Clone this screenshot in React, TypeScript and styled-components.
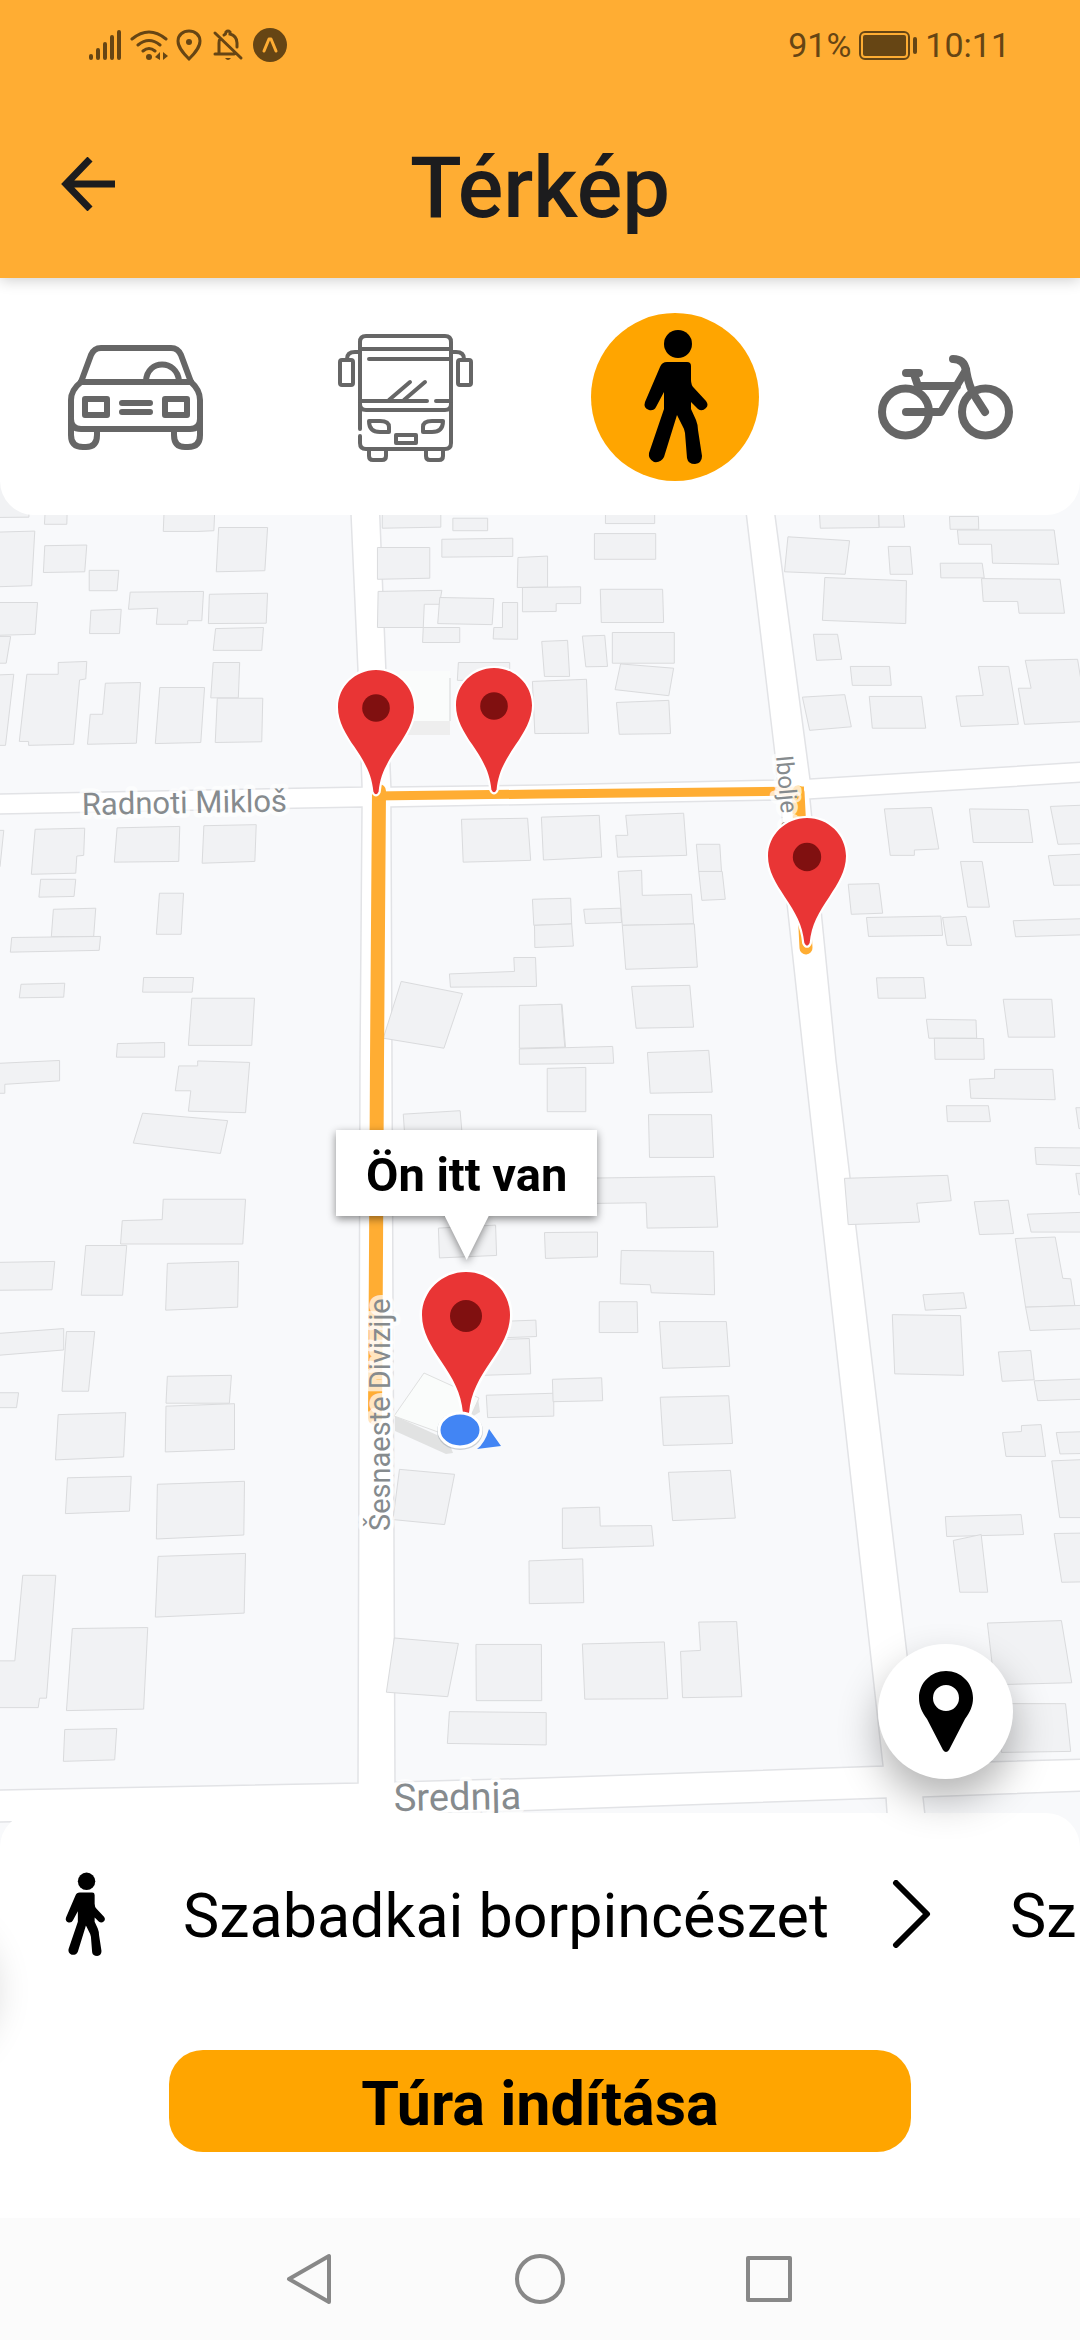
import React, { useState } from "react";
import styled, { createGlobalStyle } from "styled-components";

const amber = "#ffad33";
const orange = "#ffa500";
const statusInk = "#664514";
const iconGrey = "#666666";

const GlobalStyle = createGlobalStyle`
  * { box-sizing: border-box; }
  body { margin: 0; background: #fff; font-family: Roboto, "Noto Sans", sans-serif; color: #000; }
  button { font: inherit; color: inherit; background: none; border: 0; padding: 0; cursor: pointer; }
  h1 { margin: 0; }
  svg { display: block; }
`;

const Screen = styled.div`
  display: flex;
  flex-direction: column;
  min-height: 100vh;
  overflow: hidden;
`;

const TopArea = styled.header`
  position: relative;
  z-index: 3;
  background: ${amber};
  box-shadow: 0 2px 14px rgba(0, 0, 0, 0.2);
`;

const StatusBar = styled.div`
  display: flex;
  align-items: center;
  justify-content: space-between;
  height: 90px;
  padding: 0 70px 0 88px;
  color: ${statusInk};
  font-size: 34px;
  line-height: 40px;
`;

const StatusGroup = styled.div`
  display: flex;
  align-items: center;
  gap: 8px;
`;

const TitleBar = styled.div`
  display: grid;
  grid-template-columns: 120px 1fr 120px;
  align-items: center;
  height: 188px;
  padding: 0 28px;
`;

const BackButton = styled.button`
  display: flex;
  align-items: center;
  justify-content: center;
  width: 120px;
  height: 120px;
`;

const Title = styled.h1`
  padding-top: 8px;
  color: #1c1c1e;
  font-size: 85px;
  line-height: 100px;
  font-weight: 500;
  text-align: center;
`;

const ModePanel = styled.nav`
  position: relative;
  z-index: 2;
  display: grid;
  grid-template-columns: repeat(4, 1fr);
  justify-items: center;
  align-items: center;
  height: 237px;
  background: #fff;
  border-radius: 0 0 34px 34px;
`;

const ModeButton = styled.button<{ $active: boolean }>`
  display: flex;
  align-items: center;
  justify-content: center;
  width: 168px;
  height: 168px;
  border-radius: 50%;
  background: ${(p) => (p.$active ? orange : "transparent")};
`;

const MapCanvas = styled.main`
  position: relative;
  flex: 1;
  min-height: 600px;
  margin: -34px 0;
  background: #fff;
`;

const MapDrawing = styled.svg`
  position: absolute;
  inset: 0;
  width: 100%;
  height: 100%;
`;

const StreetLabel = styled.text`
  fill: #868b8e;
  stroke: rgba(255, 255, 255, 0.7);
  stroke-width: 9px;
  stroke-linejoin: round;
  paint-order: stroke;
`;

const Pin = styled.button<{ $x: number; $y: number; $w: number }>`
  position: absolute;
  left: ${(p) => p.$x - p.$w / 2}px;
  top: ${(p) => p.$y}px;
  width: ${(p) => p.$w}px;
`;

const PinSvg = styled.svg`
  width: 100%;
  height: auto;
  overflow: visible;
`;

const Callout = styled.div`
  position: absolute;
  left: 336px;
  top: 649px;
  filter: drop-shadow(0 3px 4px rgba(0, 0, 0, 0.45));
  display: flex;
  flex-direction: column;
  align-items: center;
`;

const CalloutText = styled.div`
  padding: 18px 30px 14px;
  background: #fff;
  font-size: 47px;
  line-height: 54px;
  font-weight: 700;
`;

const CalloutArrow = styled.div`
  width: 44px;
  height: 44px;
  background: #fff;
  clip-path: polygon(0 0, 100% 0, 50% 100%);
`;

const Position = styled.svg`
  position: absolute;
  left: 430px;
  top: 919px;
  pointer-events: none;
`;

const Sheet = styled.section`
  position: relative;
  z-index: 2;
  display: flex;
  flex-direction: column;
  align-items: center;
  padding: 0 10px 66px;
  background: #fff;
  border-radius: 34px 34px 0 0;
`;

const RoundButton = styled.button`
  position: absolute;
  top: -169px;
  right: 67px;
  display: flex;
  align-items: center;
  justify-content: center;
  width: 135px;
  height: 135px;
  border-radius: 50%;
  background: #fff;
  box-shadow: 0 20px 40px rgba(0, 0, 0, 0.3);
`;

const HiddenRoundButton = styled(RoundButton)`
  top: 90px;
  right: auto;
  left: -144px;
  box-shadow: 0 20px 40px rgba(0, 0, 0, 0.2);
`;

const Steps = styled.div`
  align-self: stretch;
  display: flex;
  align-items: center;
  height: 202px;
  margin-bottom: 35px;
  padding-left: 33px;
  margin-right: -10px;
  overflow: hidden;
  font-size: 61px;
  line-height: 72px;
  white-space: nowrap;
`;

const StepIcon = styled.span`
  flex: none;
`;

const StepName = styled.span<{ $gap: number }>`
  flex: none;
  padding-top: 4px;
  margin-left: ${(p) => p.$gap}px;
`;

const Chevron = styled.svg`
  flex: none;
  margin-left: 63px;
`;

const StartButton = styled.button`
  width: 70%;
  height: 102px;
  padding-top: 6px;
  border-radius: 34px;
  background: ${orange};
  font-size: 61px;
  line-height: 72px;
  font-weight: 700;
`;

const SystemNav = styled.footer`
  position: relative;
  z-index: 2;
  display: flex;
  align-items: center;
  justify-content: center;
  gap: 170px;
  height: 122px;
  background: #fbfbfb;
`;

const SystemButton = styled.button`
  width: 60px;
  height: 60px;
`;

type Quadrant = { x: number; y: number; sx: number; sy: number; shapes: string[] };

/* Building outlines, surveyed in four quadrants with their own grid. */
const quadrants: Quadrant[] = [
  {
    x: 0, y: 500, sx: 540 / 1568, sy: 560 / 1568,
    shapes: [
      "-20,-60 84,-60 84,48 -20,49", "129,68 133,0 196,0 194,68", "-10,90 101,87 92,240 -10,243",
      "126,203 130,128 252,126 246,201", "259,197 345,197 340,254 259,254", "474,88 477,20 624,20 621,86 575,88",
      "628,201 635,77 777,77 769,198", "-10,287 109,287 102,376 -10,379", "-10,382 31,382 18,457 -10,457",
      "373,306 378,258 591,256 586,338 545,338 545,348 454,348 458,303", "260,374 264,309 352,306 347,374",
      "605,346 608,264 777,261 773,345", "619,421 626,360 765,357 760,421",
      "56,676 78,488 169,488 169,455 252,452 249,501 231,504 214,684 83,687 83,676", "-10,490 40,488 16,687 -10,687",
      "254,684 262,600 298,600 306,513 408,511 396,681", "451,682 464,525 594,525 583,679",
      "612,554 619,455 696,455 692,554", "625,679 631,555 763,555 760,677", "1110,20 1280,20 1280,76 1110,79",
      "1315,51 1416,51 1416,86 1315,86", "1283,160 1283,110 1489,107 1489,158", "1096,133 1248,133 1248,219 1096,222",
      "1096,357 1098,256 1283,253 1276,292 1232,292 1229,357", "1271,346 1277,273 1434,276 1429,349",
      "1229,357 1335,357 1335,399 1227,399", "1432,389 1434,357 1459,357 1459,287 1503,287 1503,390",
      "1502,245 1504,161 1590,157 1590,244", "1517,245 1686,243 1686,290 1615,290 1615,312 1517,313",
      "1328,505 1331,455 1480,455 1480,505", "1546,508 1703,502 1709,653 1553,654", "-10,925 11,925 0,1027 -10,1027",
      "91,1048 102,922 246,919 243,995 223,997 220,1045", "332,1014 340,918 522,914 519,1012",
      "587,1017 592,912 744,909 740,1012", "113,1112 118,1062 220,1062 215,1110", "149,1223 155,1146 278,1143 272,1222",
      "30,1266 34,1225 292,1222 288,1261", "454,1216 463,1101 533,1101 526,1216", "56,1394 61,1356 188,1353 185,1392",
      "414,1378 417,1337 562,1337 558,1378", "547,1527 557,1395 739,1395 731,1527", "338,1560 341,1522 478,1519 478,1560",
      "1340,894 1532,891 1541,1009 1345,1014", "1305,1327 1494,1320 1492,1281 1555,1281 1558,1362 1308,1364",
      "1165,1348 1343,1382 1289,1535 1113,1507", "1546,1118 1657,1115 1660,1187 1550,1191",
      "1552,1191 1660,1187 1665,1249 1553,1253", "1558,1415 1632,1412 1642,1532 1568,1535",
    ],
  },
  {
    x: 540, y: 500, sx: 540 / 1568, sy: 560 / 1568,
    shapes: [
      "190,10 333,10 333,66 190,66", "158,94 336,94 336,166 158,166", "175,250 356,250 359,343 178,343",
      "123,381 188,379 196,466 133,467", "5,396 80,393 86,494 13,494", "210,371 390,371 390,457 210,457",
      "234,459 388,471 374,548 218,531", "222,567 374,561 379,654 230,656", "811,30 983,30 985,77 814,79",
      "983,30 1054,30 1059,76 985,76", "720,103 899,114 886,208 710,201", "1011,130 1075,130 1082,208 1017,208",
      "827,217 1064,226 1062,346 820,337", "1189,46 1273,46 1274,82 1191,82",
      "1212,84 1493,84 1506,180 1314,177 1311,124 1216,124", "1162,177 1284,177 1290,218 1164,218",
      "1282,220 1510,222 1523,317 1391,317 1387,284 1287,284", "794,376 864,376 876,446 803,449",
      "901,466 1015,466 1020,519 907,519", "762,552 885,545 904,635 783,645", "956,550 1108,550 1120,639 965,639",
      "1208,549 1287,547 1273,466 1361,466 1389,628 1222,634", "1409,449 1561,446 1590,620 1407,628 1389,527 1426,527",
      "4,888 172,883 179,1000 10,1008", "249,883 417,877 426,995 225,1000 220,939 255,939",
      "454,964 522,964 527,1040 461,1040", "461,1040 529,1040 538,1118 470,1121",
      "227,1040 295,1037 297,1107 440,1104 446,1187 239,1191", "239,1191 448,1187 457,1308 249,1314",
      "127,1146 234,1143 237,1183 132,1186", "266,1362 435,1359 446,1476 279,1479",
      "1000,865 1137,861 1158,977 1087,980 1087,995 1017,995", "1247,865 1418,867 1431,959 1258,959",
      "1482,858 1590,854 1590,962 1504,964", "1476,996 1590,991 1590,1078 1492,1079",
      "1221,1012 1284,1012 1305,1140 1242,1140", "895,1076 984,1074 995,1157 904,1160",
      "948,1169 1164,1165 1169,1219 954,1222", "1169,1169 1237,1166 1253,1247 1182,1247",
      "1374,1178 1590,1172 1590,1217 1381,1223", "977,1338 1114,1337 1120,1395 982,1395",
      "1345,1398 1486,1398 1495,1504 1360,1504", "1122,1454 1266,1456 1268,1507 1129,1507",
      "1145,1507 1288,1508 1290,1566 1147,1566", "-60,1415 62,1412 72,1532 -60,1535",
      "-60,1537 211,1530 214,1577 -60,1580", "312,1547 490,1541 500,1658 320,1661",
    ],
  },
  {
    x: 0, y: 1050, sx: 540 / 1568, sy: 780 / 1568,
    shapes: [
      "-10,27 173,21 173,62 14,69 14,87 -10,87", "509,82 519,32 574,32 574,22 725,25 713,126 547,123 554,82",
      "414,127 661,142 640,208 387,187", "350,390 355,343 471,341 474,300 713,300 705,390",
      "236,493 249,393 368,393 356,493", "-10,427 159,425 151,482 -10,483", "481,523 486,429 693,425 690,517",
      "-10,570 185,560 185,603 -10,614", "180,686 193,566 275,566 257,686", "-10,689 54,689 48,719 -10,719",
      "482,710 486,656 672,654 666,710", "480,808 482,716 681,711 681,803", "161,824 169,733 365,729 359,818",
      "190,932 196,860 381,857 376,927", "454,983 457,873 710,867 708,975", "451,1140 459,1018 713,1012 709,1132",
      "-10,1228 43,1228 66,1056 162,1056 135,1303 115,1303 111,1322 -10,1322", "193,1328 210,1163 429,1161 417,1325",
      "184,1430 188,1366 339,1364 333,1427", "1171,129 1336,122 1342,170 1175,170",
      "1273,358 1439,352 1442,413 1276,418", "1440,546 1556,543 1558,576 1440,579",
      "1400,583 1537,580 1541,651 1400,654", "1412,694 1608,690 1608,736 1416,739",
      "1160,843 1320,853 1291,954 1141,944", "1536,1027 1692,1023 1695,1111 1537,1113",
      "1145,1182 1331,1193 1300,1300 1122,1291", "1382,1195 1572,1195 1573,1308 1383,1308",
      "1305,1330 1586,1332 1586,1397 1299,1394",
    ],
  },
  {
    x: 540, y: 1050, sx: 540 / 1568, sy: 780 / 1568,
    shapes: [
      "21,37 133,35 133,124 21,124", "315,130 498,130 504,216 318,216",
      "100,258 507,254 516,356 311,358 308,307 100,309", "13,367 167,366 167,416 16,419",
      "236,403 504,405 507,492 323,488 320,472 233,470", "172,506 282,506 284,568 172,568",
      "347,546 541,546 551,636 356,640", "36,662 179,659 182,705 38,707", "349,698 548,695 559,791 358,795",
      "373,849 553,845 567,941 385,946", "65,921 173,919 175,957 324,956 330,997 65,1002",
      "123,1194 361,1190 371,1304 130,1305", "408,1209 466,1207 461,1150 571,1149 586,1300 414,1302",
      "1247,59 1320,57 1320,39 1489,39 1496,100 1251,97", "1180,112 1302,112 1308,144 1183,144",
      "884,258 1184,252 1194,303 1094,308 1102,346 895,351", "1261,305 1360,302 1375,369 1276,371",
      "1437,196 1590,197 1590,233 1441,230", "1415,330 1590,326 1590,366 1426,366",
      "1380,379 1496,376 1518,459 1541,460 1553,514 1410,517", "1410,517 1590,513 1590,560 1423,564",
      "1112,492 1230,488 1238,519 1119,523", "1023,532 1221,534 1230,654 1030,651",
      "1331,607 1425,604 1435,663 1342,666", "1435,665 1590,661 1590,702 1445,705",
      "1343,769 1398,767 1398,755 1455,753 1468,817 1353,817", "1499,769 1590,767 1590,811 1510,812",
      "1486,826 1590,823 1590,940 1509,940", "1177,938 1397,934 1404,974 1181,978",
      "1200,986 1281,974 1300,1090 1219,1090", "1493,972 1590,971 1590,1069 1515,1070",
      "1299,1152 1514,1147 1544,1272 1320,1276", "1330,1314 1526,1314 1541,1410 1340,1412",
      "1556,116 1590,116 1590,158 1565,158", "1556,248 1590,248 1590,291 1565,291",
    ],
  },
];

/* City blocks; the streets are the white gaps between them. */
const blocks = [
  "-5,470 350,470 351,515 358,672 362,787 -5,794",
  "378,470 386,672 391,787 540,785 777,780 775,755 741,470",
  "769,470 810,779 1085,762 1085,470",
  "-5,814 362,807 360,1060 358,1783 -5,1790",
  "391,807 781,800 787,904 804,1060 883,1766 540,1778 395,1782 392,1060",
  "810,799 1085,782 1085,1759 919,1764 907,1654 836,1060",
  "397,1815 886,1798 890,1860 397,1860",
  "923,1797 1085,1791 1085,1860 930,1860",
  "-5,1822 357,1815 357,1860 -5,1860",
];

function StreetMap() {
  return (
    <MapDrawing viewBox="0 481 1080 1366" preserveAspectRatio="xMidYMid slice" aria-hidden="true">
      <g fill="#f8f9fb" stroke="#e2e3e6" strokeWidth="1.5">
        {blocks.map((points) => (
          <polygon key={points} points={points} />
        ))}
      </g>
      {quadrants.map((q) => (
        <g
          key={`${q.x}-${q.y}`}
          transform={`translate(${q.x} ${q.y}) scale(${q.sx} ${q.sy})`}
          fill="#f1f2f4"
          stroke="#dadbdd"
        >
          {q.shapes.map((points) => (
            <polygon key={points} points={points} vectorEffect="non-scaling-stroke" />
          ))}
        </g>
      ))}
      <path d="M400 671H450V713H400Z" fill="#fafcfb" />
      <path d="M400 721H450V735H400Z" fill="#eeeeee" />
      <path d="M400 678H450V721H400Z" fill="#fafcfb" />
      <path d="M450 678V721" stroke="#d5d7d7" />
      <path d="M395 1416L448 1440L453 1453L446 1454L395 1431Z" fill="#e1e2e2" />
      <path d="M478 1398L480 1412L470 1418Z" fill="#e1e2e2" />
      <path d="M424 1373L479 1398L460 1440L394 1416Z" fill="#fafcfb" stroke="#dfe0e0" />
      <g fill="none" stroke={amber}>
        <path d="M379 791L377 1060L376 1250L375 1418" strokeWidth="14" strokeLinecap="round" />
        <path d="M373 796L540 794L804 791" strokeWidth="9" />
        <path d="M798 792L802 870L806 948" strokeWidth="13" strokeLinecap="round" />
      </g>
      <StreetLabel x="82" y="815" fontSize="31" transform="rotate(-1 82 815)">Radnoti Mikloš</StreetLabel>
      <StreetLabel fontSize="29" transform="translate(390 1531) rotate(-90)">Šesnaeste Divizije</StreetLabel>
      <StreetLabel fontSize="24" transform="translate(776 756) rotate(85)">Ibolje t</StreetLabel>
      <StreetLabel x="394" y="1811" fontSize="38" transform="rotate(-1 394 1811)">Srednja</StreetLabel>
    </MapDrawing>
  );
}

function PinShape() {
  return (
    <PinSvg viewBox="0 0 88 145">
      <path
        d="M44 0C68 0 88 19 88 43C88 60 79 74 69 89C57 107 49 120 47 141Q44 147 41 141C39 120 31 107 19 89C9 74 0 60 0 43C0 19 20 0 44 0Z"
        fill="#e93535"
        stroke="#fff"
        strokeWidth="5"
        paintOrder="stroke"
      />
      <circle cx="44" cy="44" r="16" fill="#801010" />
    </PinSvg>
  );
}

function CarIcon() {
  return (
    <svg width="135" height="135" viewBox="0 0 135 135" fill="none" stroke={iconGrey} strokeWidth="6" strokeLinecap="round" strokeLinejoin="round">
      <path d="M13 53L23 26Q26 19 33 19H103Q110 19 113 26L123 53" />
      <path d="M13 53H123" />
      <path d="M13 53Q3 61 3 71V106Q3 118 15 118H18Q29 118 29 106V101" />
      <path d="M123 53Q132 61 132 71V106Q132 118 120 118H117Q106 118 106 106V101" />
      <path d="M3 90Q3 100 13 100H122Q132 100 132 90" />
      <path d="M78 52C79 30 109 30 111 52" />
      <rect x="17" y="70" width="22" height="16" />
      <rect x="97" y="70" width="22" height="16" />
      <path d="M54 74H82M54 83H82" />
    </svg>
  );
}

function BusIcon() {
  return (
    <svg width="135" height="135" viewBox="0 0 135 135" fill="none" stroke={iconGrey} strokeWidth="4" strokeLinecap="round" strokeLinejoin="round">
      <path d="M22 100V13Q22 7 28 7H107Q113 7 113 13V114Q113 120 107 120H28Q22 120 22 114V107" />
      <path d="M22 20H113M31 30H113M22 72H89M98 72H113" />
      <path d="M22 75Q22 81 28 81H107Q113 81 113 75" />
      <path d="M22 23H17Q9 23 9 30M113 23H118Q126 23 126 30" />
      <rect x="2" y="31" width="13" height="25" rx="2" />
      <rect x="120" y="31" width="13" height="25" rx="2" />
      <path d="M72 53L51 71M87 53L66 71" />
      <path d="M31 92H42Q51 92 51 98V103H42Q31 103 31 92ZM105 92H94Q85 92 85 98V103H94Q105 103 105 92Z" />
      <rect x="58" y="106" width="20" height="8" />
      <path d="M31 121V127Q31 131 35 131H44Q48 131 48 127V121M88 121V127Q88 131 92 131H101Q105 131 105 127V121" />
    </svg>
  );
}

function WalkIcon({ size }: { size: number }) {
  return (
    <svg width={size} height={size} viewBox="0 0 135 135">
      <circle cx="70" cy="15" r="14" />
      <path d="M59 33H79Q83 33 83 37V51Q83 56 86 59L98 72Q101 76 98 79Q94 83 90 80L83 73V80L88 91Q90 96 90 101L94 127Q94 134 87 135Q80 135 79 129L77 104Q76 99 74 96L69 86L56 128Q53 134 46 133Q40 130 41 124L56 80V63L48 78Q46 82 41 81Q35 79 37 73L52 38Q54 33 59 33Z" />
    </svg>
  );
}

function BikeIcon() {
  return (
    <svg width="135" height="135" viewBox="0 0 135 135" fill="none" stroke={iconGrey} strokeWidth="8" strokeLinecap="round" strokeLinejoin="round">
      <circle cx="27.5" cy="83" r="23.5" />
      <circle cx="107.5" cy="83" r="23.5" />
      <path d="M28 44H41M36 45L40 57H79M28 83H63L88 41" />
      <path d="M75 30Q86 30 88 41Q91 59 98 69L107 83" />
    </svg>
  );
}

function StatusIcons() {
  return (
    <svg width="200" height="34" viewBox="0 0 200 34" fill="none" stroke={statusInk} strokeWidth="4" strokeLinecap="round" role="img" aria-label="Állapot">
      <path d="M3 28V30M10 22V30M17 16V30M24 9V30M31 4V30" />
      <path d="M44 11Q61 -3 78 11M50 17Q61 8 72 17M55 23Q61 18 67 23" strokeWidth="3" />
      <circle cx="61" cy="29" r="3" fill={statusInk} stroke="none" />
      <path d="M72 24V32L67 29ZM75 24V32L80 28Z" fill={statusInk} stroke="none" />
      <path d="M101 31C96 26 90 20 90 13C90 7 95 3 101 3C107 3 112 7 112 13C112 20 106 26 101 31Z" strokeWidth="3" />
      <circle cx="101" cy="14" r="3" fill={statusInk} stroke="none" />
      <path d="M127 5L153 30M127 26H146M131 25V15Q131 12 132 11M136 7Q138 6 138 4Q140 2 142 4L142 6Q149 8 149 15V19" strokeWidth="3" />
      <path d="M137 30H143Q140 34 137 30Z" fill={statusInk} stroke="none" />
      <circle cx="182" cy="17" r="17" fill={statusInk} stroke="none" />
      <path d="M176 23L181 11H183L188 23" stroke={amber} strokeWidth="3" strokeLinejoin="round" />
    </svg>
  );
}

function BatteryIcon() {
  return (
    <svg width="58" height="29" viewBox="0 0 58 29" fill={statusInk} role="img" aria-label="Akkumulátor">
      <rect x="1" y="1" width="49" height="27" rx="5" fill="none" stroke={statusInk} strokeWidth="2" />
      <rect x="4" y="4" width="43" height="21" rx="2" />
      <rect x="54" y="6" width="4" height="17" rx="2" />
    </svg>
  );
}

const modes = [
  { id: "car", label: "Autó", icon: <CarIcon /> },
  { id: "bus", label: "Busz", icon: <BusIcon /> },
  { id: "walk", label: "Gyalog", icon: <WalkIcon size={135} /> },
  { id: "bike", label: "Kerékpár", icon: <BikeIcon /> },
];

const stops = [
  { x: 376, y: 189, w: 76 },
  { x: 494, y: 187, w: 76 },
  { x: 807, y: 337, w: 78 },
  { x: 466, y: 791, w: 88 },
];

const PlaceIcon = () => (
  <svg width="54" height="81" viewBox="0 0 54 81">
    <path fillRule="evenodd" d="M27 0C42 0 54 12 54 27C54 35 51 41 46 48L30 79Q27 83 24 79L8 48C3 41 0 35 0 27C0 12 12 0 27 0ZM27 14A13 13 0 1 0 27 40A13 13 0 1 0 27 14Z" />
  </svg>
);

export default function App() {
  const [mode, setMode] = useState("walk");
  return (
    <Screen>
      <GlobalStyle />
      <TopArea>
        <StatusBar>
          <StatusIcons />
          <StatusGroup>
            <span>91%</span>
            <BatteryIcon />
            <span>10:11</span>
          </StatusGroup>
        </StatusBar>
        <TitleBar>
          <BackButton aria-label="Vissza">
            <svg width="54" height="54" viewBox="0 0 54 54" fill="none" stroke="#1c1c1e" strokeWidth="7">
              <path d="M29 2L5 27L29 52M5 27H54" />
            </svg>
          </BackButton>
          <Title>Térkép</Title>
        </TitleBar>
      </TopArea>
      <ModePanel>
        {modes.map((m) => (
          <ModeButton key={m.id} $active={m.id === mode} aria-label={m.label} onClick={() => setMode(m.id)}>
            {m.icon}
          </ModeButton>
        ))}
      </ModePanel>
      <MapCanvas>
        <StreetMap />
        {stops.map((s) => (
          <Pin key={s.x} $x={s.x} $y={s.y} $w={s.w} aria-label="Megálló">
            <PinShape />
          </Pin>
        ))}
        <Callout>
          <CalloutText>Ön itt van</CalloutText>
          <CalloutArrow />
        </Callout>
        <Position width="80" height="60" viewBox="0 0 80 60">
          <ellipse cx="30" cy="31" rx="23" ry="19" fill="#8894a0" fillOpacity="0.4" />
          <ellipse cx="30" cy="30" rx="21" ry="17" fill="#4285f4" stroke="#fff" strokeWidth="3" />
          <path d="M59 29L71 46L47 49Q55 43 59 29Z" fill="#4285f4" />
        </Position>
      </MapCanvas>
      <Sheet>
        <HiddenRoundButton aria-label="Bezárás" />
        <RoundButton aria-label="Saját hely">
          <PlaceIcon />
        </RoundButton>
        <Steps>
          <StepIcon>
            <WalkIcon size={84} />
          </StepIcon>
          <StepName $gap={56}>Szabadkai borpincészet</StepName>
          <Chevron width="40" height="68" viewBox="0 0 40 68" fill="none" stroke="#000" strokeWidth="6" strokeLinecap="round" strokeLinejoin="round">
            <path d="M4 3L35 34L4 65" />
          </Chevron>
          <StepName $gap={78}>Sz</StepName>
        </Steps>
        <StartButton>Túra indítása</StartButton>
      </Sheet>
      <SystemNav>
        <SystemButton aria-label="Vissza">
          <svg width="60" height="60" viewBox="0 0 60 60" fill="none" stroke="#888" strokeWidth="4" strokeLinejoin="round">
            <path d="M49 7V53L9 30Z" />
          </svg>
        </SystemButton>
        <SystemButton aria-label="Kezdőlap">
          <svg width="60" height="60" viewBox="0 0 60 60" fill="none" stroke="#888" strokeWidth="4">
            <circle cx="30" cy="30" r="23" />
          </svg>
        </SystemButton>
        <SystemButton aria-label="Alkalmazások">
          <svg width="60" height="60" viewBox="0 0 60 60" fill="none" stroke="#888" strokeWidth="4" strokeLinejoin="round">
            <rect x="8" y="9" width="42" height="42" />
          </svg>
        </SystemButton>
      </SystemNav>
    </Screen>
  );
}
